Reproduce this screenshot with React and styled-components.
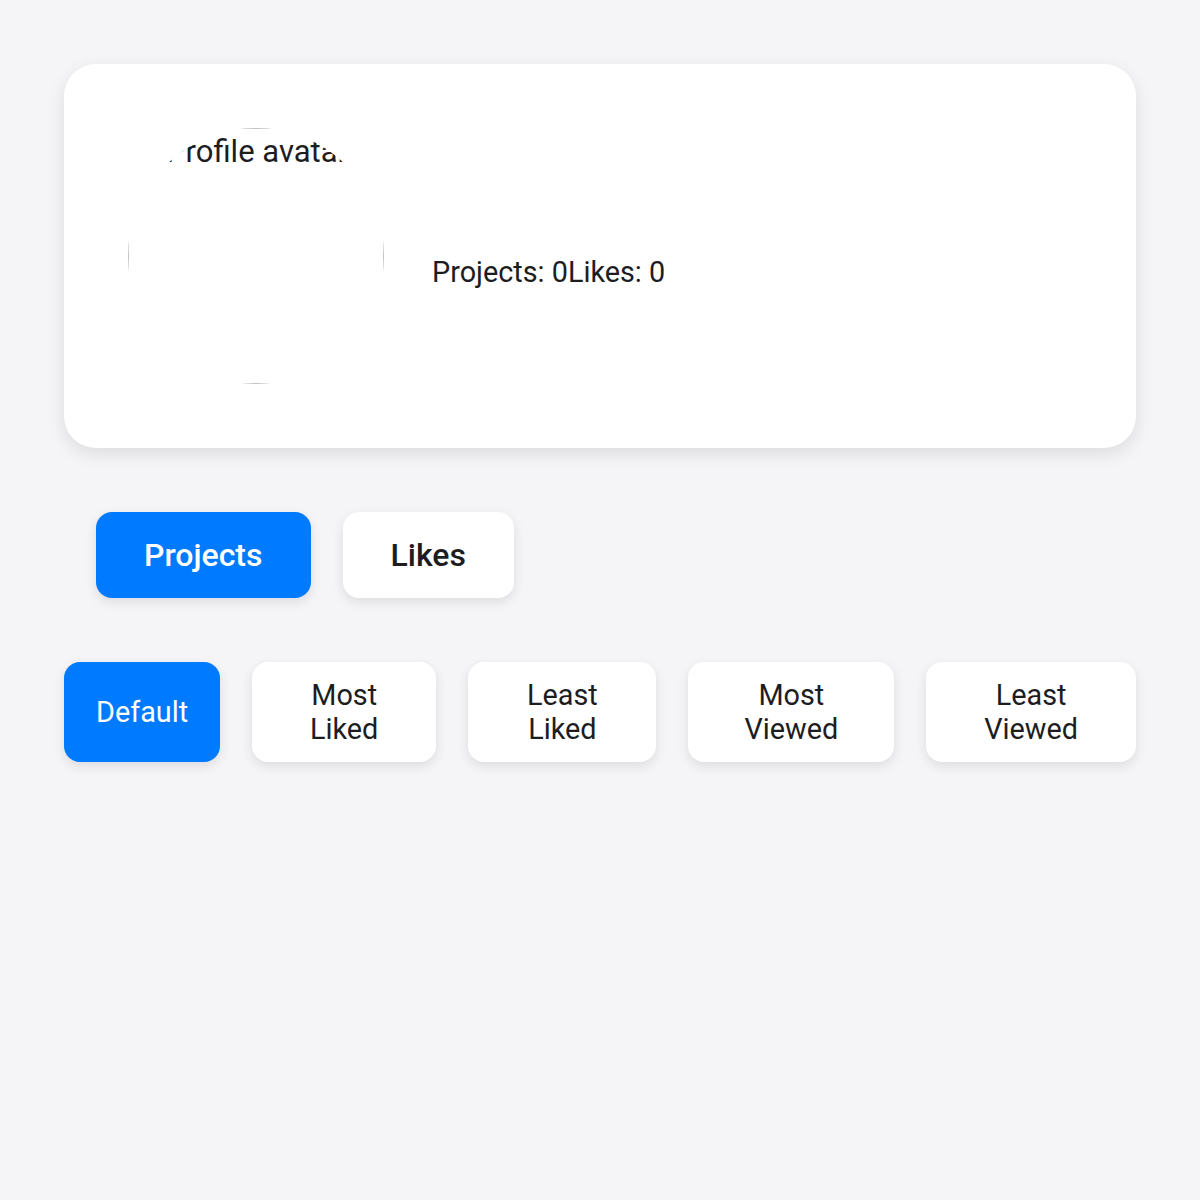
import React from "react";
import styled, { createGlobalStyle } from "styled-components";

const Global = createGlobalStyle`
  html, body { margin: 0; padding: 0; background: #f5f5f7; }
  body { font-family: Roboto, "Liberation Sans", sans-serif; color: #1d1d1f; }
  * { box-sizing: border-box; }
`;

const Page = styled.div`
  padding: 64px;
  display: flex;
  flex-direction: column;
`;

const Card = styled.section`
  background: #fff;
  border-radius: 32px;
  box-shadow: 0 6px 18px rgba(0, 0, 0, 0.1);
  padding: 64px;
  display: flex;
  align-items: center;
  gap: 48px;
`;

const Avatar = styled.div`
  width: 256px;
  height: 256px;
  flex: none;
  border-radius: 50%;
  overflow: hidden;
  background: #fff;
`;

const BrokenFrame = styled.div`
  width: 100%;
  height: 100%;
  border: 1px solid #c0c0c0;
  padding: 4px 0 0 37px;
  font-size: 31px;
  white-space: nowrap;
  color: #1d1d1f;
`;

const Stats = styled.div`
  font-size: 28.8px;
  margin-top: 32px;
`;

const Tabs = styled.div`
  display: flex;
  gap: 32px;
  margin: 64px 32px 0;
`;

const Tab = styled.button`
  font-family: Roboto, "Liberation Sans", sans-serif;
  font-size: 32px;
  font-weight: 500;
  padding: 24px 48px;
  border: none;
  border-radius: 16px;
  background: ${(p) => (p.$active ? "#007aff" : "#fff")};
  color: ${(p) => (p.$active ? "#fff" : "#1d1d1f")};
  box-shadow: 0 4px 12px rgba(0, 0, 0, 0.1);
  cursor: pointer;
`;

const Sorts = styled.div`
  display: flex;
  gap: 32px;
  margin-top: 64px;
`;

const SortButton = styled.button`
  font-family: Roboto, "Liberation Sans", sans-serif;
  font-size: 28.8px;
  padding: 16px 32px;
  border: none;
  border-radius: 16px;
  background: ${(p) => (p.$active ? "#007aff" : "#fff")};
  color: ${(p) => (p.$active ? "#fff" : "#1d1d1f")};
  box-shadow: 0 4px 12px rgba(0, 0, 0, 0.1);
  cursor: pointer;
`;

const sorts = ["Default", "Most Liked", "Least Liked", "Most Viewed", "Least Viewed"];

export default function App() {
  return (
    <>
      <Global />
      <Page>
        <Card>
          <Avatar>
            <BrokenFrame>Profile avatar</BrokenFrame>
          </Avatar>
          <Stats>
            <span>Projects: 0</span>
            <span>Likes: 0</span>
          </Stats>
        </Card>
        <Tabs>
          <Tab $active>Projects</Tab>
          <Tab>Likes</Tab>
        </Tabs>
        <Sorts>
          {sorts.map((s, i) => (
            <SortButton key={s} $active={i === 0}>
              {s}
            </SortButton>
          ))}
        </Sorts>
      </Page>
    </>
  );
}
